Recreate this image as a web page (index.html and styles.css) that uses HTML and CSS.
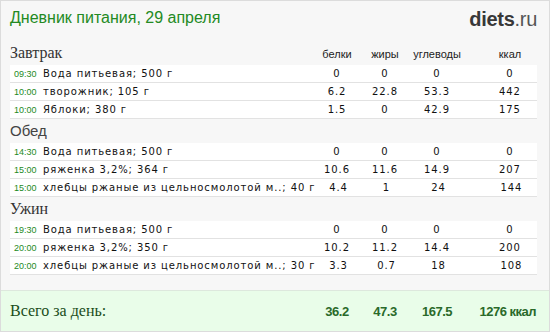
FILE: index.html
```html
<!DOCTYPE html>
<html lang="ru">
<head>
<meta charset="utf-8">
<link rel="stylesheet" href="styles.css">
</head>
<body>
<div class="card">
  <div class="top">
    <div class="title">Дневник питания, 29 апреля</div>
    <div class="logo"><b>diets</b>.ru</div>
  </div>

  <div class="meal">
    <div class="head">
      <div class="mname serif">Завтрак</div>
      <div class="h">белки</div><div class="h">жиры</div><div class="h">углеводы</div><div class="h last">ккал</div>
    </div>
    <div class="row"><div class="name"><span class="t">09:30</span>Вода питьевая; 500 г</div><div class="n">0</div><div class="n">0</div><div class="n">0</div><div class="n last">0</div></div>
    <div class="row"><div class="name"><span class="t">10:00</span>творожник; 105 г</div><div class="n">6.2</div><div class="n">22.8</div><div class="n">53.3</div><div class="n last">442</div></div>
    <div class="row"><div class="name"><span class="t">10:00</span>Яблоки; 380 г</div><div class="n">1.5</div><div class="n">0</div><div class="n">42.9</div><div class="n last">175</div></div>
  </div>

  <div class="meal">
    <div class="head">
      <div class="mname sans">Обед</div>
    </div>
    <div class="row"><div class="name"><span class="t">14:30</span>Вода питьевая; 500 г</div><div class="n">0</div><div class="n">0</div><div class="n">0</div><div class="n last">0</div></div>
    <div class="row"><div class="name"><span class="t">15:00</span>ряженка 3,2%; 364 г</div><div class="n">10.6</div><div class="n">11.6</div><div class="n">14.9</div><div class="n last">207</div></div>
    <div class="row"><div class="name"><span class="t">15:00</span>хлебцы ржаные из цельносмолотой м..; 40 г</div><div class="n">4.4</div><div class="n">1</div><div class="n">24</div><div class="n last">144</div></div>
  </div>

  <div class="meal">
    <div class="head">
      <div class="mname serif">Ужин</div>
    </div>
    <div class="row"><div class="name"><span class="t">19:30</span>Вода питьевая; 500 г</div><div class="n">0</div><div class="n">0</div><div class="n">0</div><div class="n last">0</div></div>
    <div class="row"><div class="name"><span class="t">20:00</span>ряженка 3,2%; 350 г</div><div class="n">10.2</div><div class="n">11.2</div><div class="n">14.4</div><div class="n last">200</div></div>
    <div class="row"><div class="name"><span class="t">20:00</span>хлебцы ржаные из цельносмолотой м..; 30 г</div><div class="n">3.3</div><div class="n">0.7</div><div class="n">18</div><div class="n last">108</div></div>
  </div>

  <div class="total">
    <div class="tlabel">Всего за день:</div>
    <div class="tn">36.2</div><div class="tn">47.3</div><div class="tn">167.5</div><div class="tn tlast">1276 ккал</div>
  </div>
</div>
</body>
</html>
```

FILE: styles.css
```css
* { box-sizing: border-box; margin: 0; padding: 0; }
body { background: #f7f7f7; width: 550px; height: 332px; }
.card {
  width: 550px; height: 332px;
  border: 1px solid #dcdcdc;
  background: #f7f7f7;
  display: flex; flex-direction: column;
}
.top {
  height: 40px;
  display: flex; justify-content: space-between; align-items: flex-start;
  padding: 0 12px 0 9px;
}
.title {
  font-family: "Liberation Sans", Arial, sans-serif;
  font-size: 16px; color: #238a23;
  line-height: 18px; padding-top: 8px;
}
.logo {
  font-family: "Liberation Sans", Arial, sans-serif;
  font-size: 20px; color: #555; line-height: 20px; padding-top: 8px;
  letter-spacing: -0.3px;
}
.logo b { color: #383838; }
.meal { padding: 0 12px 0 9px; }
.head, .row, .total {
  display: grid;
  grid-template-columns: 1fr 46px 50px 54px 73px;
}
.head { height: 24px; align-items: end; }
.mname { font-size: 16px; color: #333; line-height: 20px; padding-bottom: 2px; }
.serif { font-family: "Liberation Serif", "Times New Roman", serif; }
.sans { font-family: "Liberation Sans", Arial, sans-serif; font-size: 15px; color: #444; }
.h {
  font-family: "Liberation Sans", Arial, sans-serif;
  font-size: 11px; color: #222; text-align: center; padding-bottom: 5px;
}
.last { padding-left: 19px; }
.row {
  background: #fff; height: 18px; border-bottom: 1px solid #e2e2e2;
  align-items: center;
  font-family: "DejaVu Sans", Verdana, sans-serif; font-size: 10px; color: #111;
  letter-spacing: 0.9px;
}
.name { white-space: nowrap; padding-left: 4px; }
.t {
  font-family: "Liberation Sans", Arial, sans-serif; font-size: 9px; color: #1d8a1d;
  letter-spacing: 0; display: inline-block; width: 29px;
}
.n { text-align: center; }
.total {
  margin-top: auto;
  height: 41px; background: #e9fde9; border-top: 1px solid #dde8dd;
  padding: 0 12px 0 9px; align-items: center;
}
.tlabel {
  font-family: "Liberation Serif", "Times New Roman", serif;
  font-size: 16px; color: #1a4d1a;
}
.tn {
  font-family: "Liberation Sans", Arial, sans-serif;
  font-weight: bold; font-size: 13px; color: #2a6a2a; text-align: center;
  letter-spacing: -0.5px; white-space: nowrap;
}
.tlast { text-align: right; padding-right: 1px; }
```
